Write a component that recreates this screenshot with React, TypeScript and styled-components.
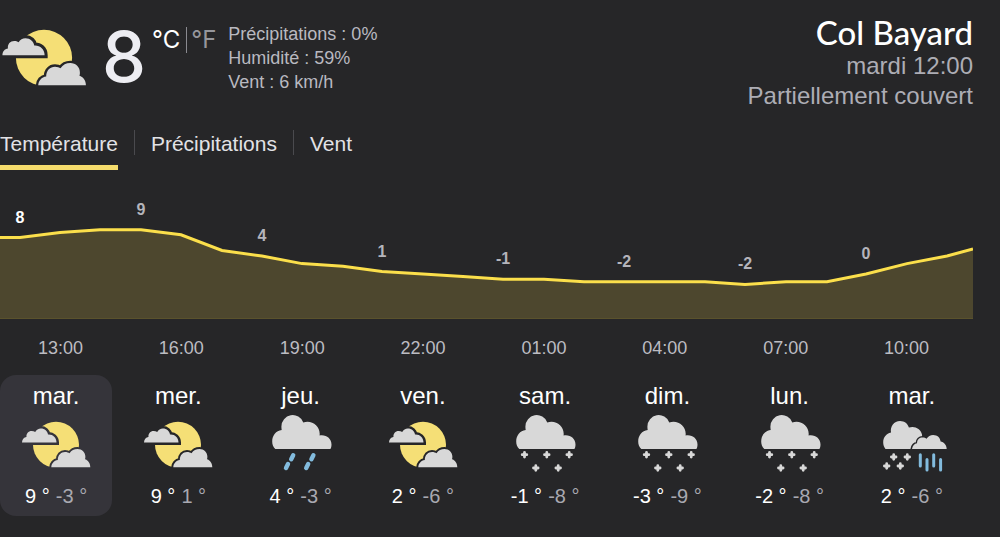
import React, { useId, useState } from "react";
import styled, { createGlobalStyle } from "styled-components";

const GlobalStyle = createGlobalStyle`
  *, *::before, *::after { box-sizing: border-box; }
  body {
    margin: 0;
    background: #262628;
    color: #e8e8ec;
    font-family: "Liberation Sans", Arial, sans-serif;
  }
  button {
    margin: 0;
    padding: 0;
    border: 0;
    background: none;
    color: inherit;
    font: inherit;
    cursor: pointer;
  }
`;

const Widget = styled.main`
  padding: 13px 27px 21px 0;
`;

const Header = styled.header`
  display: flex;
  align-items: flex-start;
  height: 102px;
`;

const Temperature = styled.div`
  width: 44px;
  margin-left: 14px;
  padding-top: 8px;
  color: #ededf2;
  font-family: Inter, sans-serif;
  font-size: 70px;
  font-weight: 500;
  line-height: 72px;
  text-align: center;
`;

const Units = styled.div`
  display: flex;
  align-items: center;
  height: 26px;
  margin: 14px 0 0 6px;
  font-family: Inter, sans-serif;
  font-size: 24px;
  line-height: 26px;
`;

const Unit = styled.button<{ $active: boolean }>`
  color: ${(p) => (p.$active ? "#ffffff" : "#96969c")};
`;

const UnitRule = styled.span`
  width: 1px;
  height: 26px;
  margin: 0 4px 0 6px;
  background: #8a8a90;
`;

const Stats = styled.div`
  margin: 9px 0 0 12px;
  color: #b9b9c0;
  font-size: 18px;
  line-height: 24px;
`;

const Place = styled.div`
  flex: 1;
  color: #adadb5;
  font-size: 24px;
  line-height: 30px;
  text-align: right;
`;

const PlaceName = styled.h1`
  margin: 0;
  color: #ffffff;
  font-family: Lato, sans-serif;
  font-size: 33px;
  font-weight: 500;
  line-height: 38px;
`;

const Tabs = styled.div`
  display: flex;
  gap: 16px;
  margin-top: 15px;
`;

const TabRule = styled.span`
  width: 1px;
  height: 25px;
  background: #4a4a4e;
`;

const Tab = styled.button<{ $active: boolean }>`
  height: 40px;
  padding-bottom: 8px;
  border-bottom: 5px solid ${(p) => (p.$active ? "#f5dc6c" : "transparent")};
  color: #e2e2e6;
  font-size: 21px;
  line-height: 27px;
`;

const Chart = styled.svg`
  display: block;
  width: 100%;
  height: auto;
  margin-top: 20px;
  font-size: 16px;
  font-weight: 700;
  text-anchor: middle;
`;

const Hours = styled.div`
  display: grid;
  grid-template-columns: repeat(8, 1fr);
  padding: 16px 6px 15px 0;
  color: #bcbcc2;
  font-size: 18px;
  line-height: 24px;
  text-align: center;
`;

const Days = styled.div`
  display: grid;
  grid-template-columns: repeat(8, 1fr);
  gap: 10px;
  padding-right: 5px;
`;

const Day = styled.button<{ $active: boolean }>`
  display: flex;
  flex-direction: column;
  align-items: center;
  padding: 9px 0 8px;
  border-radius: 16px;
  background: ${(p) => (p.$active ? "#35343a" : "transparent")};
  line-height: 24px;
`;

const DayName = styled.span`
  color: #ffffff;
  font-size: 24px;
`;

const DayTemps = styled.span`
  display: flex;
  gap: 6px;
  margin-top: 4px;
  font-size: 20px;
`;

const High = styled.span`
  color: #ffffff;
`;

const Low = styled.span`
  color: #a9a9b1;
`;

type Kind = "partly" | "rain" | "snow" | "mixed";

const CLOUD = "#d8d8d8";
const RAIN = "#82bbdd";

const CLOUD_BACK =
  "M2 34.5 C2 31.5 3.8 29.3 6.5 29 C6 25.5 8.4 22.9 11.6 22.9 C13 22.9 14.2 23.3 15.2 24 C16.5 21.8 18.4 20.6 20.8 20.6 C24.8 20.6 27.6 23.3 28 26.6 C32.5 26.2 36.5 29.5 36.5 34.5 Z";
const CLOUD_FRONT =
  "M31.3 59.2 C31.5 55.5 34 52.5 37.8 52 C37.8 47 41 44 45 44 C47 44 48.5 44.6 49.5 45.3 C51.5 42.3 54 41 57.5 41 C62 41 65.5 44.3 65.4 49 C65.3 50 65.2 50.8 65 51.3 C67.8 52 70.3 55 70.3 59.2 Z";
const CLOUD_LARGE =
  "M10.3 41 C8.3 39 7.2 36.5 7.2 33.5 C7.2 27.5 11 22.7 16.7 22 C16.5 20.8 16.4 19.5 16.4 18.4 A11.3 11.3 0 0 1 38.3 14.5 C46.5 11.8 54.7 17.5 54.7 25.7 L54.6 27.5 C61 26.3 66.5 30.5 66.5 36.5 C66.5 38.5 66 40 65.4 41 Z";
const CLOUD_MEDIUM =
  "M9.5 41 C8 39.3 7.2 37 7.2 34.5 C7.2 29.5 10.3 25.5 15 24.6 C14 18.5 18 13 24 13 C28.5 13 31.9 15.8 32.9 19.6 C38.5 17.6 44.5 20.5 46 26.5 L47 41 Z";
const CLOUD_SIDE =
  "M36 41 C36.5 37.7 38.5 35.7 41 35.3 C41 31.5 43.5 29.5 46.6 29.5 C48.2 29.5 49.6 30 50.6 30.8 C52 28.3 54.3 27 57.2 27 C61.3 27 64.3 29.8 64.6 33.5 C67.8 34 70.7 37 70.7 41 Z";

const flake = (x: number, y: number) =>
  `M${x - 2.3} ${y} h4.6 M${x} ${y - 2.3} v4.6`;

const Picture = styled.svg<{ $size: number }>`
  display: block;
  flex: none;
  width: ${(p) => p.$size}px;
  height: ${(p) => p.$size}px;
`;

function WeatherIcon({ kind, size = 72 }: { kind: Kind; size?: number }) {
  const id = useId();
  return (
    <Picture $size={size} viewBox="0 0 72 72" aria-hidden="true">
      {kind === "partly" && (
        <>
          <mask id={id} maskUnits="userSpaceOnUse" x="0" y="0" width="72" height="72">
            <rect width="72" height="72" fill="#fff" />
            <path d={CLOUD_BACK} stroke="#000" strokeWidth="5" />
            <path d={CLOUD_FRONT} stroke="#000" strokeWidth="4" />
          </mask>
          <circle cx="36" cy="36.7" r="23" fill="#f5df76" mask={`url(#${id})`} />
          <path d={CLOUD_BACK} fill={CLOUD} />
          <path d={CLOUD_FRONT} fill={CLOUD} />
        </>
      )}
      {(kind === "rain" || kind === "snow") && <path d={CLOUD_LARGE} fill={CLOUD} />}
      {kind === "rain" && (
        <path
          d="M28.2 47.2 L26.2 51.2 M23 56 L21 60 M48.4 47.2 L46.4 51.2 M43.2 56 L41.2 60"
          stroke={RAIN}
          strokeWidth="4.4"
          strokeLinecap="round"
        />
      )}
      {kind === "snow" && (
        <path
          d={[
            flake(15.5, 46.7),
            flake(37.8, 46.7),
            flake(60.2, 46.7),
            flake(26.8, 60),
            flake(49.2, 60),
          ].join(" ")}
          stroke={CLOUD}
          strokeWidth="2.8"
          strokeLinecap="round"
        />
      )}
      {kind === "mixed" && (
        <>
          <mask id={id} maskUnits="userSpaceOnUse" x="0" y="0" width="72" height="72">
            <rect width="72" height="72" fill="#fff" />
            <path d={CLOUD_SIDE} stroke="#000" strokeWidth="3" />
          </mask>
          <path d={CLOUD_MEDIUM} fill={CLOUD} mask={`url(#${id})`} />
          <path d={CLOUD_SIDE} fill={CLOUD} />
          <path
            d={[flake(17.7, 49), flake(31.3, 49), flake(10.7, 58), flake(24.3, 58)].join(" ")}
            stroke={CLOUD}
            strokeWidth="2.8"
            strokeLinecap="round"
          />
          <path
            d="M44.3 46.8 V58 M51 51.5 V62 M57.7 46.8 V58 M64.6 51.5 V62"
            stroke={RAIN}
            strokeWidth="3"
            strokeLinecap="round"
          />
        </>
      )}
    </Picture>
  );
}

const POINTS: [number, number][] = [
  [0, 47.5], [20, 47.5], [60, 42.5], [100, 39.8], [141, 39.8], [181, 44.8],
  [222, 60.5], [262, 66], [302, 73.6], [343, 76.3], [382, 81.5], [423, 84],
  [463, 86.6], [503, 89.2], [544, 89.2], [584, 91.8], [624, 91.8], [665, 91.8],
  [705, 91.8], [745, 94.4], [786, 91.8], [827, 91.8], [866, 84], [907, 73.6],
  [947, 66], [973, 59],
];

const READINGS = [
  { point: 1, value: "8" },
  { point: 4, value: "9" },
  { point: 7, value: "4" },
  { point: 10, value: "1" },
  { point: 13, value: "-1" },
  { point: 16, value: "-2" },
  { point: 19, value: "-2" },
  { point: 22, value: "0" },
];

const HOURS = ["13:00", "16:00", "19:00", "22:00", "01:00", "04:00", "07:00", "10:00"];
const TABS = ["Température", "Précipitations", "Vent"];

const DAYS: { name: string; kind: Kind; high: number; low: number }[] = [
  { name: "mar.", kind: "partly", high: 9, low: -3 },
  { name: "mer.", kind: "partly", high: 9, low: 1 },
  { name: "jeu.", kind: "rain", high: 4, low: -3 },
  { name: "ven.", kind: "partly", high: 2, low: -6 },
  { name: "sam.", kind: "snow", high: -1, low: -8 },
  { name: "dim.", kind: "snow", high: -3, low: -9 },
  { name: "lun.", kind: "snow", high: -2, low: -8 },
  { name: "mar.", kind: "mixed", high: 2, low: -6 },
];

export default function App() {
  const [tab, setTab] = useState(0);
  const [day, setDay] = useState(0);
  const line = POINTS.map(([x, y]) => `${x},${y}`).join(" ");

  return (
    <>
      <GlobalStyle />
      <Widget>
        <Header>
          <WeatherIcon kind="partly" size={88} />
          <Temperature>8</Temperature>
          <Units>
            <Unit type="button" $active>°C</Unit>
            <UnitRule />
            <Unit type="button" $active={false}>°F</Unit>
          </Units>
          <Stats>
            <div>Précipitations : 0%</div>
            <div>Humidité : 59%</div>
            <div>Vent : 6 km/h</div>
          </Stats>
          <Place>
            <PlaceName>Col Bayard</PlaceName>
            <div>mardi 12:00</div>
            <div>Partiellement couvert</div>
          </Place>
        </Header>

        <Tabs role="tablist">
          {TABS.map((name, i) => (
            <React.Fragment key={name}>
              {i > 0 && <TabRule />}
              <Tab type="button" role="tab" aria-selected={i === tab} $active={i === tab} onClick={() => setTab(i)}>
                {name}
              </Tab>
            </React.Fragment>
          ))}
        </Tabs>

        <Chart viewBox="0 0 973 130">
          <polygon points={`${line} 973,129 0,129`} fill="#4d472e" />
          <path d="M0 128.5 H973" stroke="#5a522c" />
          <polyline points={line} fill="none" stroke="#fbdf4b" strokeWidth="3" />
          {READINGS.map(({ point, value }, i) => (
            <text key={point} x={POINTS[point][0]} y={POINTS[point][1] - 15} fill={i === 0 ? "#ffffff" : "#b4b4bb"}>
              {value}
            </text>
          ))}
        </Chart>

        <Hours>
          {HOURS.map((hour) => (
            <span key={hour}>{hour}</span>
          ))}
        </Hours>

        <Days>
          {DAYS.map(({ name, kind, high, low }, i) => (
            <Day key={i} type="button" $active={i === day} onClick={() => setDay(i)}>
              <DayName>{name}</DayName>
              <WeatherIcon kind={kind} />
              <DayTemps>
                <High>{high} °</High>
                <Low>{low} °</Low>
              </DayTemps>
            </Day>
          ))}
        </Days>
      </Widget>
    </>
  );
}
